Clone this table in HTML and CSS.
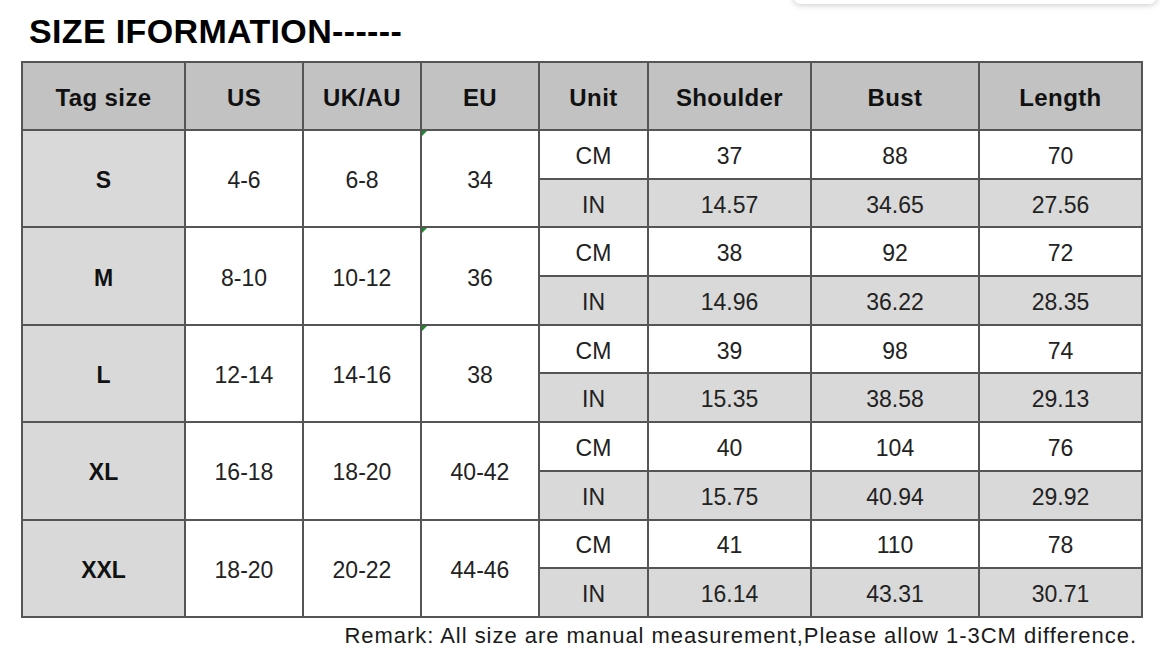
FILE: index.html
```html
<!DOCTYPE html>
<html>
<head>
<meta charset="utf-8">
<link rel="stylesheet" href="styles.css">
</head>
<body>
<div class="popup"></div>
<div class="page">
  <h1 class="title">SIZE IFORMATION------</h1>
  <table class="sizes">
    <colgroup>
      <col class="c-tag"><col class="c-us"><col class="c-uk"><col class="c-eu"><col class="c-unit"><col class="c-sh"><col class="c-bust"><col class="c-len">
    </colgroup>
    <thead>
      <tr><th>Tag size</th><th>US</th><th>UK/AU</th><th>EU</th><th>Unit</th><th>Shoulder</th><th>Bust</th><th>Length</th></tr>
    </thead>
    <tbody>
      <tr class="cm"><td rowspan="2" class="tag">S</td><td rowspan="2">4-6</td><td rowspan="2">6-8</td><td rowspan="2" class="eu"><span class="flag"></span>34</td><td>CM</td><td>37</td><td>88</td><td>70</td></tr>
      <tr class="in"><td>IN</td><td>14.57</td><td>34.65</td><td>27.56</td></tr>
      <tr class="cm"><td rowspan="2" class="tag">M</td><td rowspan="2">8-10</td><td rowspan="2">10-12</td><td rowspan="2" class="eu"><span class="flag"></span>36</td><td>CM</td><td>38</td><td>92</td><td>72</td></tr>
      <tr class="in"><td>IN</td><td>14.96</td><td>36.22</td><td>28.35</td></tr>
      <tr class="cm"><td rowspan="2" class="tag">L</td><td rowspan="2">12-14</td><td rowspan="2">14-16</td><td rowspan="2" class="eu"><span class="flag"></span>38</td><td>CM</td><td>39</td><td>98</td><td>74</td></tr>
      <tr class="in"><td>IN</td><td>15.35</td><td>38.58</td><td>29.13</td></tr>
      <tr class="cm"><td rowspan="2" class="tag">XL</td><td rowspan="2">16-18</td><td rowspan="2">18-20</td><td rowspan="2" class="eu">40-42</td><td>CM</td><td>40</td><td>104</td><td>76</td></tr>
      <tr class="in"><td>IN</td><td>15.75</td><td>40.94</td><td>29.92</td></tr>
      <tr class="cm"><td rowspan="2" class="tag">XXL</td><td rowspan="2">18-20</td><td rowspan="2">20-22</td><td rowspan="2" class="eu">44-46</td><td>CM</td><td>41</td><td>110</td><td>78</td></tr>
      <tr class="in"><td>IN</td><td>16.14</td><td>43.31</td><td>30.71</td></tr>
    </tbody>
  </table>
  <p class="remark">Remark: All size are manual measurement,Please allow 1-3CM difference.</p>
</div>
</body>
</html>
```

FILE: styles.css
```css
html, body {
  margin: 0;
  padding: 0;
  background: #ffffff;
}
body {
  font-family: "Liberation Sans", Arial, sans-serif;
  color: #111111;
  width: 1169px;
  height: 655px;
  overflow: hidden;
  position: relative;
}
.popup {
  position: absolute;
  left: 793px;
  top: -40px;
  width: 364px;
  height: 44px;
  background: #ffffff;
  border-radius: 8px;
  box-shadow: 0 1px 6px rgba(0, 0, 0, 0.22);
}
.page {
  padding: 14px 0 0 21px;
}
.title {
  margin: 0 0 0 8px;
  font-size: 34px;
  line-height: 34px;
  font-weight: bold;
  color: #000000;
  letter-spacing: 0.35px;
}
.sizes {
  margin-top: 13px;
  border-collapse: collapse;
  table-layout: fixed;
  width: 1120px;
}
.c-tag { width: 163px; }
.c-us { width: 118px; }
.c-uk { width: 118px; }
.c-eu { width: 118px; }
.c-unit { width: 109px; }
.c-sh { width: 163px; }
.c-bust { width: 168px; }
.c-len { width: 163px; }
.sizes th,
.sizes td {
  border: 2px solid #555555;
  text-align: center;
  vertical-align: middle;
  padding: 4px 0 0 0;
}
.sizes th {
  background: #c2c2c2;
  height: 62px;
  font-size: 24px;
  font-weight: bold;
  color: #111111;
  letter-spacing: 0.4px;
}
.sizes td {
  height: 42.7px;
  font-size: 23px;
  color: #222222;
  background: #ffffff;
}
.sizes td.tag {
  background: #d9d9d9;
  font-weight: bold;
  color: #111111;
}
.sizes tr.in td {
  background: #d9d9d9;
}
.sizes td.eu {
  position: relative;
}
.flag {
  position: absolute;
  left: 0;
  top: 0;
  width: 0;
  height: 0;
  border-top: 5px solid #1e8a2e;
  border-right: 5px solid transparent;
}
.remark {
  margin: 5px 0 0 0;
  width: 1116px;
  text-align: right;
  font-size: 22px;
  line-height: 26px;
  color: #1a1a1a;
  letter-spacing: 0.97px;
}
```
